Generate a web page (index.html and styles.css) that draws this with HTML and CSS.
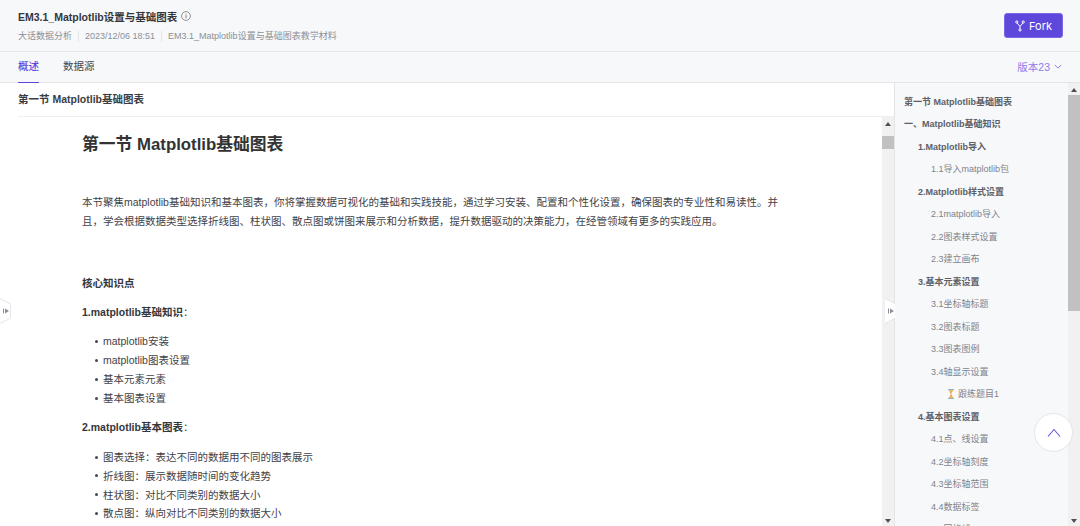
FILE: index.html
```html
<!DOCTYPE html>
<html lang="zh">
<head>
<meta charset="utf-8">
<title>EM3.1_Matplotlib设置与基础图表</title>
<link rel="stylesheet" href="styles.css">
</head>
<body>
<div class="app">
  <header class="top">
    <div class="top-info">
      <div class="title-row">
        <h1 class="title">EM3.1_Matplotlib设置与基础图表</h1>
        <svg class="info" viewBox="0 0 10 10" width="10" height="10"><circle cx="5" cy="5" r="4.4" fill="none" stroke="#777" stroke-width=".8"/><path d="M5 4.2v3.2M5 2.6v.9" stroke="#777" stroke-width=".9" fill="none"/></svg>
      </div>
      <div class="meta">
        <span class="meta-item">大话数据分析</span>
        <span class="meta-item">2023/12/06 18:51</span>
        <span class="meta-item">EM3.1_Matplotlib设置与基础图表教学材料</span>
      </div>
    </div>
    <button class="fork">
      <svg viewBox="0 0 10 12" width="10" height="12"><g fill="none" stroke="#fff" stroke-width="1"><circle cx="1.8" cy="2" r="1.1"/><circle cx="8.2" cy="2" r="1.1"/><circle cx="5" cy="10" r="1.1"/><path d="M2.2 3.1 5 6.4l2.8-3.3M5 6.4v2.5"/></g></svg>
      Fork
    </button>
  </header>
  <nav class="tabs">
    <a class="tab active">概述</a>
    <a class="tab">数据源</a>
    <div class="version">版本23
      <svg viewBox="0 0 10 6" width="8" height="5"><path d="M1 1l4 4 4-4" fill="none" stroke="#7c5ee6" stroke-width="1"/></svg>
    </div>
  </nav>
  <main class="body">
    <section class="doc">
      <div class="doc-head">第一节 Matplotlib基础图表</div>
      <div class="doc-frame">
        <article class="doc-text">
          <h2 class="h1">第一节 Matplotlib基础图表</h2>
          <p class="intro">本节聚焦matplotlib基础知识和基本图表，你将掌握数据可视化的基础和实践技能，通过学习安装、配置和个性化设置，确保图表的专业性和易读性。并且，学会根据数据类型选择折线图、柱状图、散点图或饼图来展示和分析数据，提升数据驱动的决策能力，在经管领域有更多的实践应用。</p>
          <p class="core"><b>核心知识点</b></p>
          <p class="para"><b>1.matplotlib基础知识</b>：</p>
          <ul class="list">
            <li>matplotlib安装</li>
            <li>matplotlib图表设置</li>
            <li>基本元素元素</li>
            <li>基本图表设置</li>
          </ul>
          <p class="para"><b>2.matplotlib基本图表</b>：</p>
          <ul class="list">
            <li>图表选择：表达不同的数据用不同的图表展示</li>
            <li>折线图：展示数据随时间的变化趋势</li>
            <li>柱状图：对比不同类别的数据大小</li>
            <li>散点图：纵向对比不同类别的数据大小</li>
          </ul>
        </article>
        <div class="bar inner-bar"><i class="up"></i><b class="thumb thumb-doc"></b><i class="down"></i></div>
      </div>
      <div class="handle handle-left"><svg viewBox="0 0 6 6" width="6" height="6"><path d="M0 .5h1v5H0zM2 .5 6 3 2 5.500z" fill="#8a8f99"/></svg></div>
      <div class="handle handle-right"><svg viewBox="0 0 6 6" width="6" height="6"><path d="M0 .5h1v5H0zM2 .5 6 3 2 5.500z" fill="#8a8f99"/></svg></div>
    </section>
    <aside class="toc">
      <ul class="toc-list">
        <li class="l0">第一节 Matplotlib基础图表</li>
        <li class="l0">一、Matplotlib基础知识</li>
        <li class="l1">1.Matplotlib导入</li>
        <li class="l2">1.1导入matplotlib包</li>
        <li class="l1">2.Matplotlib样式设置</li>
        <li class="l2">2.1matplotlib导入</li>
        <li class="l2">2.2图表样式设置</li>
        <li class="l2">2.3建立画布</li>
        <li class="l1">3.基本元素设置</li>
        <li class="l2">3.1坐标轴标题</li>
        <li class="l2">3.2图表标题</li>
        <li class="l2">3.3图表图例</li>
        <li class="l2">3.4轴显示设置</li>
        <li class="l3"><svg viewBox="0 0 8 10" width="8" height="10"><path d="M1 .5h6M1 9.500h6" stroke="#8fb3cf" stroke-width="1"/><path d="M1.800 1h4.400L4.400 5l1.800 4H1.800l1.800-4z" fill="#f2b25c"/></svg>跟练题目1</li>
        <li class="l1">4.基本图表设置</li>
        <li class="l2">4.1点、线设置</li>
        <li class="l2">4.2坐标轴刻度</li>
        <li class="l2">4.3坐标轴范围</li>
        <li class="l2">4.4数据标签</li>
        <li class="l2">4.5网格线</li>
      </ul>
      <div class="bar toc-bar"><i class="up"></i><b class="thumb thumb-toc"></b><i class="down"></i></div>
      <button class="to-top"><svg viewBox="0 0 14 9" width="14" height="9"><path d="M1 8.500 7 1.500l6 7" fill="none" stroke="#6a4fe0" stroke-width="1.100"/></svg></button>
    </aside>
  </main>
</div>
</body>
</html>
```
FILE: styles.css
```css
* { box-sizing: border-box; }
html, body { margin: 0; height: 100%; overflow: hidden; }
body {
  font-family: "Liberation Sans", "Noto Sans CJK SC", sans-serif;
  color: #333;
  background: #f7f8fa;
}
.app { display: flex; flex-direction: column; height: 526px; overflow: hidden; }
.top {
  height: 52px; flex: none;
  display: flex; align-items: flex-start; justify-content: space-between;
  padding: 9px 17px 0 18px;
  background: #f7f8fa;
  border-bottom: 1px solid #e6e8ec;
}
.title-row { display: flex; align-items: center; gap: 4px; height: 16px; }
.title { margin: 0; font-size: 10.500px; line-height: 16px; font-weight: 700; color: #33363c; }
.info { display: block; margin-top: -2px; }
.meta { display: flex; margin-top: 4px; font-size: 9px; line-height: 14px; color: #8b8f97; }
.meta-item { padding-right: 6px; margin-right: 6px; border-right: 1px solid #e3e5e9; height: 11px; line-height: 11px; margin-top: 2px; }
.meta-item:last-child { border: 0; }
.fork {
  width: 59px; height: 25px; margin-top: 4px;
  display: flex; align-items: center; justify-content: center; gap: 4px;
  font: 11px "Inter", "Liberation Sans", sans-serif; color: #fff;
  background: #5e48dc; border: 1px solid #7a68e6; border-radius: 3px; padding: 0;
}
.tabs {
  height: 31px; flex: none;
  display: flex; align-items: stretch; gap: 24px;
  padding: 0 18px;
  background: #f7f8fa;
  border-bottom: 1px solid #e3e5e9;
}
.tab { font-size: 10.500px; line-height: 28px; color: #44474d; height: 31px; }
.tab.active { color: #5e48dc; font-weight: 500; border-bottom: 1px solid #5e48dc; }
.version { margin-left: auto; display: flex; align-items: center; gap: 4px; height: 29px; font-size: 10.500px; color: #8f7aea; }
.body { flex: 1; display: flex; min-height: 0; position: relative; }
.doc { width: 895px; flex: none; background: #fff; border-right: 1px solid #e3e5e9; display: flex; flex-direction: column; position: relative; }
.doc-head {
  height: 34px; flex: none; margin-left: 18px; padding-top: 9px;
  font-size: 10.500px; line-height: 15px; font-weight: 700; color: #3a3d42;
  border-bottom: 1px solid #eeeff1;
}
.doc-frame { flex: 1; display: flex; min-height: 0; overflow: hidden; }
.doc-text { flex: 1; min-width: 0; padding: 0 103px 0 82px; font-size: 10.500px; color: #3f4247; overflow: hidden; }
.h1 { margin: 16px 0 0; font-size: 16.800px; line-height: 24px; font-weight: 700; color: #333; }
.intro { margin: 36px 0 0; line-height: 19px; }
.core { margin: 44px 0 0; line-height: 16px; }
.para { margin: 13px 0 0; line-height: 16px; }
.doc-text b { color: #33363b; }
.list { margin: 12px 0 0; padding: 0 0 0 21px; line-height: 19px; list-style: none; }
.list li { height: 19px; }
.list li::before { content: ""; display: inline-block; width: 3px; height: 3px; border-radius: 50%; background: #45484d; margin-left: -8.500px; margin-right: 5.500px; vertical-align: 2.500px; }
.list + .para { margin-top: 11px; }
.list:last-child { margin-top: 13px; }
.list:last-child li { height: 18.800px; }
.bar { width: 12px; flex: none; background: #f1f1f1; display: flex; flex-direction: column; align-items: center; position: relative; }
.inner-bar { height: 100%; }
.up, .down { display: block; width: 0; height: 0; border: 3px solid transparent; position: absolute; left: 3px; }
.up { border-bottom: 4px solid #505050; border-top: 0; top: 5px; }
.down { border-top: 4px solid #505050; border-bottom: 0; bottom: 3px; }
.thumb { display: block; background: #c1c1c1; position: absolute; left: 0; width: 12px; }
.thumb-doc { top: 19px; height: 13px; }
.thumb-toc { top: 12px; height: 216px; }
.handle {
  position: absolute; top: 215px; width: 11px; height: 26px;
  display: flex; align-items: center; justify-content: center;
  background: #e3e5e9;
  clip-path: polygon(0 0, 100% 22%, 100% 78%, 0 100%);
}
.handle svg { position: relative; }
.handle::before { content: ""; position: absolute; inset: 1px 1px 1px 0; background: #fff; clip-path: polygon(0 0, 100% 22%, 100% 78%, 0 100%); }
.handle-left { left: 0; }
.handle-right { left: 885px; }
.toc { flex: 1; min-width: 0; display: flex; background: #f7f8fa; position: relative; overflow: hidden; }
.toc-list { flex: 1; min-width: 0; margin: 0; padding: 7.500px 0 0 9px; list-style: none; font-size: 9px; line-height: 22.500px; color: #7f838a; white-space: nowrap; }
.toc-list li { height: 22.500px; }
.l0, .l1 { font-weight: 700; color: #5c6067; }
.l1 { padding-left: 14px; }
.l2 { padding-left: 27px; }
.l3 { padding-left: 43px; display: flex; align-items: center; gap: 3px; }
.toc-bar { height: 100%; }
.to-top {
  position: absolute; left: 139px; top: 330px; width: 39px; height: 39px; padding: 0;
  display: flex; align-items: center; justify-content: center;
  border-radius: 50%; background: #fff; border: 1px solid #e3e5e9;
}
```
